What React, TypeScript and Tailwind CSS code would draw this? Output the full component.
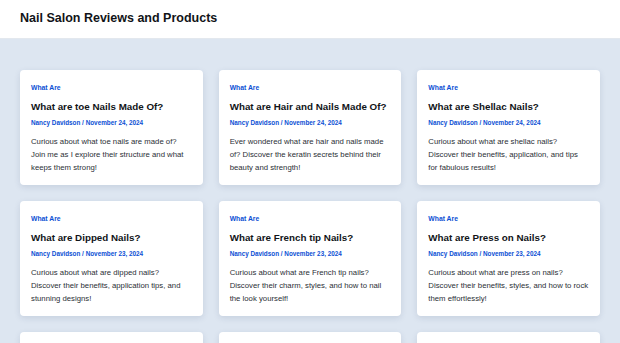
import React from 'react';

interface Post {
  category: string;
  title: string;
  author: string;
  date: string;
  excerpt: string;
}

const posts: Post[] = [
  {
    category: 'What Are',
    title: 'What are toe Nails Made Of?',
    author: 'Nancy Davidson',
    date: 'November 24, 2024',
    excerpt: 'Curious about what toe nails are made of? Join me as I explore their structure and what keeps them strong!',
  },
  {
    category: 'What Are',
    title: 'What are Hair and Nails Made Of?',
    author: 'Nancy Davidson',
    date: 'November 24, 2024',
    excerpt: 'Ever wondered what are hair and nails made of? Discover the keratin secrets behind their beauty and strength!',
  },
  {
    category: 'What Are',
    title: 'What are Shellac Nails?',
    author: 'Nancy Davidson',
    date: 'November 24, 2024',
    excerpt: 'Curious about what are shellac nails? Discover their benefits, application, and tips for fabulous results!',
  },
  {
    category: 'What Are',
    title: 'What are Dipped Nails?',
    author: 'Nancy Davidson',
    date: 'November 23, 2024',
    excerpt: 'Curious about what are dipped nails? Discover their benefits, application tips, and stunning designs!',
  },
  {
    category: 'What Are',
    title: 'What are French tip Nails?',
    author: 'Nancy Davidson',
    date: 'November 23, 2024',
    excerpt: 'Curious about what are French tip nails? Discover their charm, styles, and how to nail the look yourself!',
  },
  {
    category: 'What Are',
    title: 'What are Press on Nails?',
    author: 'Nancy Davidson',
    date: 'November 23, 2024',
    excerpt: 'Curious about what are press on nails? Discover their benefits, styles, and how to rock them effortlessly!',
  },
  {
    category: 'What Are',
    title: 'What are Gel Nails?',
    author: 'Nancy Davidson',
    date: 'November 22, 2024',
    excerpt: 'Curious about what are gel nails? Discover their benefits, application, and care tips for lasting shine!',
  },
  {
    category: 'What Are',
    title: 'What are Acrylic Nails?',
    author: 'Nancy Davidson',
    date: 'November 22, 2024',
    excerpt: 'Curious about what are acrylic nails? Discover how they are applied and how to keep them looking great!',
  },
  {
    category: 'What Are',
    title: 'What are Nails Made Of?',
    author: 'Nancy Davidson',
    date: 'November 22, 2024',
    excerpt: 'Ever wondered what nails are made of? Learn about keratin and what keeps your nails healthy and strong!',
  },
];

const PostCard: React.FC<{ post: Post }> = ({ post }) => (
  <article className="bg-white rounded-[4px] shadow-[0_2px_6px_rgba(30,50,90,0.12)] pl-[11px] pr-[11.7px] pt-[12px] pb-[11px]">
    <a className="block text-[6.8px] leading-[12px] font-bold text-[#0b4fd4]">{post.category}</a>
    <h2 className="mt-[6px] text-[9.8px] leading-[14px] font-bold text-[#111418]">{post.title}</h2>
    <p className="mt-[4px] text-[6.35px] leading-[10px] font-bold text-[#0b4fd4]">
      {post.author} / {post.date}
    </p>
    <p className="mt-[7px] text-[7.75px] leading-[13px] text-[#2b2f36]">{post.excerpt}</p>
  </article>
);

export default function App() {
  return (
    <div className="min-h-screen bg-[#dde6f1]" style={{ fontFamily: '"Liberation Sans", Arial, sans-serif' }}>
      <header className="h-[39px] bg-white border-b border-[#e3e8ee] flex items-center px-[20px]">
        <h1 className="text-[12.5px] font-bold text-[#111418] leading-none -mt-[1px]">Nail Salon Reviews and Products</h1>
      </header>
      <main className="px-[20px] pt-[31px] pb-[32px]">
        <div className="grid grid-cols-3 gap-x-[16px] gap-y-[16px]">
          {posts.map((post, i) => (
            <PostCard key={i} post={post} />
          ))}
        </div>
      </main>
    </div>
  );
}
